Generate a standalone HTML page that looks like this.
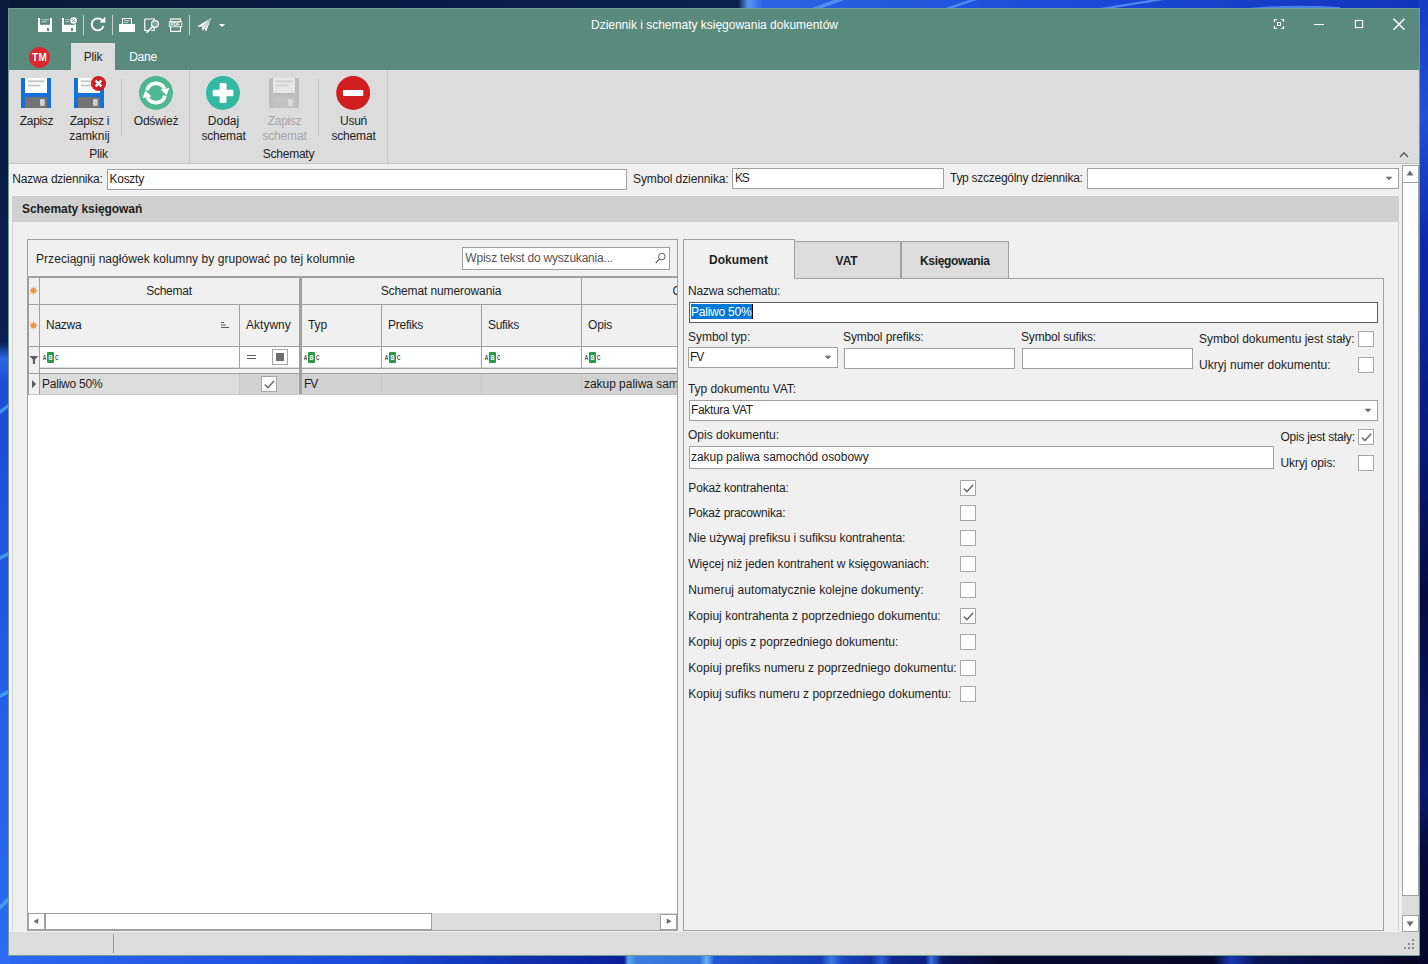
<!DOCTYPE html>
<html lang="pl">
<head>
<meta charset="utf-8">
<title>Dziennik i schematy księgowania dokumentów</title>
<style>
*{box-sizing:border-box;margin:0;padding:0}
html,body{width:1428px;height:964px;overflow:hidden}
body{position:relative;font-family:"Liberation Sans",sans-serif;font-size:12px;color:#1e1e1e;background:#0a1a3c}
#wall{position:absolute;left:0;top:0;width:1428px;height:964px}
#win{position:absolute;left:0;top:0;width:1428px;height:964px;overflow:hidden}
#win div,#win svg{position:absolute;white-space:nowrap}
.t{line-height:16px;height:16px}
.c{text-align:center}
.inp{background:#fff;border:1px solid #a0a0a0}
.cb{background:#fff;border:1px solid #a6a6a6}
</style>
</head>
<body>
<svg id="wall" viewBox="0 0 1428 964" preserveAspectRatio="none">
<defs>
<linearGradient id="lg" x1="0" y1="0" x2="0" y2="1"><stop offset="0" stop-color="#0a1a3e"/><stop offset=".355" stop-color="#0b2152"/><stop offset=".372" stop-color="#2a66e4"/><stop offset=".4" stop-color="#1a4cd4"/><stop offset=".6" stop-color="#2058e6"/><stop offset="1" stop-color="#2c6af4"/></linearGradient>
<linearGradient id="tg" x1="0" y1="0" x2="1" y2="0"><stop offset="0" stop-color="#0a1838"/><stop offset=".5" stop-color="#0c2150"/><stop offset=".517" stop-color="#0c2150"/><stop offset=".524" stop-color="#5a98f2"/><stop offset=".534" stop-color="#2a64e4"/><stop offset=".74" stop-color="#1c4cd8"/><stop offset="1" stop-color="#1232bc"/></linearGradient>
<linearGradient id="bg" x1="0" y1="0" x2="1" y2="0"><stop offset="0" stop-color="#2c68f0"/><stop offset="0.25" stop-color="#1a4cdc"/><stop offset="0.42" stop-color="#0c249c"/><stop offset="0.437" stop-color="#0a1e98"/><stop offset="0.44" stop-color="#5aa8ec"/><stop offset="0.446" stop-color="#3c7ce0"/><stop offset="0.49" stop-color="#3070dc"/><stop offset="0.495" stop-color="#6ab0f0"/><stop offset="0.5" stop-color="#2458d4"/><stop offset="0.575" stop-color="#163cb8"/><stop offset="0.582" stop-color="#3a78e0"/><stop offset="0.59" stop-color="#1a44c4"/><stop offset="0.61" stop-color="#12309c"/><stop offset="0.617" stop-color="#2a60d0"/><stop offset="0.625" stop-color="#0e2890"/><stop offset="0.648" stop-color="#0c2080"/><stop offset="0.652" stop-color="#3a70e0"/><stop offset="0.66" stop-color="#0a1660"/><stop offset="0.7" stop-color="#060a30"/><stop offset="0.85" stop-color="#05082a"/><stop offset="0.862" stop-color="#1838b0"/><stop offset="0.88" stop-color="#0a1658"/><stop offset="0.95" stop-color="#06093a"/><stop offset="1" stop-color="#04061c"/></linearGradient>
<linearGradient id="rg" x1="0" y1="0" x2="0" y2="1"><stop offset="0" stop-color="#163cc8"/><stop offset=".12" stop-color="#2250d8"/><stop offset=".25" stop-color="#0c2aae"/><stop offset=".45" stop-color="#081c80"/><stop offset=".62" stop-color="#050a40"/><stop offset=".82" stop-color="#0a1a70"/><stop offset=".88" stop-color="#060c3c"/><stop offset="1" stop-color="#05082c"/></linearGradient>
</defs>
<rect width="1428" height="964" fill="#0a1a3c"/>
<rect x="0" y="0" width="1428" height="10" fill="url(#tg)"/>
<path d="M812 8l22-8h10l-22 8zM945 8l24-8h8l-24 8zM1100 8l50-8h14l-50 8z" fill="#5a98f2" opacity=".8"/>
<path d="M1250 8q40-4 90-1l0 1z" fill="#4a80e8"/>
<rect x="0" y="953" width="1428" height="11" fill="url(#bg)"/>
<rect x="0" y="0" width="10" height="964" fill="url(#lg)"/>
<path d="M0 410l8-6v4l-8 6zM0 556l8-4v4l-8 4zM0 694l8-4v4l-8 4zM0 905l8-8v5l-8 8z" fill="#48a8f4" opacity=".8"/>
<rect x="1418" y="0" width="10" height="964" fill="url(#rg)"/>
<rect x="0" y="953" width="10" height="11" fill="#2c6af4"/>
<rect x="1418" y="0" width="10" height="10" fill="#163cc8"/>

</svg>
<div id="win">
<div class="" style="left:8px;top:8px;width:1412px;height:948px;background:#f0f0f0"></div>
<div class="" style="left:8px;top:8px;width:1412px;height:62px;background:#5a8a7b"></div>
<div class="" style="left:8px;top:70px;width:1412px;height:94px;background:#dcdcdc"></div>
<div class="" style="left:8px;top:163px;width:1412px;height:1px;background:#c6c6c6"></div>
<svg style="left:30px;top:12px" width="210" height="26" viewBox="30 12 210 26" fill="none">
<!-- save -->
<path d="M38 18h14v14H38z" fill="#fff"/>
<rect x="40" y="18" width="10" height="6.800" fill="#5a8a7b"/>
<rect x="41.500" y="19.300" width="7.500" height=".9" fill="#c5d6d0"/>
<rect x="41.500" y="21.300" width="5.500" height=".9" fill="#c5d6d0"/>
<rect x="47" y="28" width="2" height="3" fill="#5a8a7b"/>
<!-- save & close -->
<path d="M62 18h14v14H62z" fill="#fff"/>
<rect x="64" y="18" width="10" height="6.800" fill="#5a8a7b"/>
<rect x="65.500" y="19.300" width="4" height=".9" fill="#c5d6d0"/>
<rect x="65.500" y="21.300" width="3.500" height=".9" fill="#c5d6d0"/>
<rect x="71" y="28" width="2" height="3" fill="#5a8a7b"/>
<circle cx="73.600" cy="20.500" r="3.900" fill="#5a8a7b"/>
<circle cx="73.600" cy="20.500" r="3.300" fill="#fff"/>
<path d="M72.300 19.200l2.600 2.600M74.900 19.200l-2.600 2.600" stroke="#5a8a7b" stroke-width=".9"/>
<!-- sep -->
<rect x="83" y="15" width="1" height="20" fill="#c8cfcc"/>
<!-- refresh -->
<path d="M102.300 20.400A6 6 0 1 0 103.500 26" stroke="#fff" stroke-width="1.800" fill="none"/>
<path d="M99.600 22.600l5.800 .2-.2-6z" fill="#fff"/>
<rect x="112" y="15" width="1" height="20" fill="#c8cfcc"/>
<!-- print -->
<path d="M119 24h16v8h-16z" fill="#fff"/>
<rect x="122.500" y="18.500" width="9" height="6" fill="#5a8a7b" stroke="#fff" stroke-width="1"/>
<rect x="124" y="20" width="5.500" height=".9" fill="#c5d6d0"/><rect x="124" y="22" width="4" height=".9" fill="#c5d6d0"/>
<!-- preview -->
<path d="M144.800 19h9.400v3M144.800 19v11.500h4M154.200 27.500v3h-3" stroke="#fff" stroke-width="1.200"/>
<circle cx="155" cy="24" r="3.400" stroke="#fff" stroke-width="1.200" fill="#7fa79a"/>
<path d="M152.600 26.600l-6 6" stroke="#fff" stroke-width="1.600"/>
<!-- pdf -->
<rect x="170.600" y="19" width="9.800" height="12.400" stroke="#fff" stroke-width="1.200"/>
<rect x="169.200" y="21.600" width="12.600" height="5.200" fill="#5a8a7b" stroke="#fff" stroke-width=".8"/>
<!-- send -->
<path d="M197 26.500l14.300-8.500-5.300 13.800-1.300-3.600-2.200 2.800-.4-4.300z" fill="#fff"/>
<path d="M202.300 26.800l8-7.600-5.500 9" stroke="#5a8a7b" stroke-width=".7" fill="none"/>
<rect x="189" y="15" width="1" height="20" fill="#c8cfcc"/>
<path d="M219 24h6l-3 3z" fill="#fff"/>
</svg>
<div class="t" style="left:170.300px;top:21.700px;font-size:5px;line-height:5px;height:5px;font-weight:bold;color:#fff;letter-spacing:-.1px">PDF</div>
<div class="t" style="left:591.00px;top:17px;letter-spacing:-0.011px;color:#fff">Dziennik i schematy księgowania dokumentów</div>
<svg style="left:1268px;top:14px" width="144" height="22" viewBox="1268 14 144 22" fill="none" stroke="#fff">
<path d="M1274.400 22v-2.400h2.400M1281.200 19.600h2.400v2.400M1283.600 26v2.400h-2.400M1276.800 28.400h-2.400v-2.400" stroke-width="1.100"/>
<rect x="1277.500" y="22.500" width="3" height="3" stroke-width="1"/>
<path d="M1314 24.500h10" stroke-width="1"/>
<rect x="1355.400" y="20.500" width="7.200" height="7.100" stroke-width="1.100"/>
<path d="M1393.500 18.700l11 11M1404.500 18.700l-11 11" stroke-width="1.450"/>
</svg>
<div style="left:29px;top:47px;width:21px;height:21px;border-radius:50%;background:#dc2630"></div>
<div class="t c" style="left:29px;top:49.500px;width:21px;font-size:10px;font-weight:bold;color:#fff;letter-spacing:.5px;text-indent:.5px">TM</div>
<div class="" style="left:71px;top:43px;width:44px;height:27px;background:#dcdcdc"></div>
<div class="t" style="left:83.75px;top:49px;letter-spacing:-0.209px;">Plik</div>
<div class="t" style="left:129.21px;top:49px;letter-spacing:-0.275px;color:#fff">Dane</div>
<svg style="left:21px;top:78px;opacity:1" width="30" height="30" viewBox="0 0 30 30">
<rect width="30" height="30" fill="#1372d8"/>
<rect x="4" y="0" width="22" height="15" fill="#fff"/>
<rect x="6.700" y="2.300" width="16.600" height="2" fill="#c8c8c8"/>
<rect x="6.700" y="6.500" width="12.600" height="2" fill="#c8c8c8"/>
<rect x="4" y="19" width="22" height="11" fill="#737373"/>
<rect x="19" y="21" width="4.700" height="7" rx="1" fill="#d0d0d0"/>
</svg>
<svg style="left:74px;top:78px;opacity:1" width="30" height="30" viewBox="0 0 30 30">
<rect width="30" height="30" fill="#1372d8"/>
<rect x="4" y="0" width="22" height="15" fill="#fff"/>
<rect x="6.700" y="2.300" width="16.600" height="2" fill="#c8c8c8"/>
<rect x="6.700" y="6.500" width="12.600" height="2" fill="#c8c8c8"/>
<rect x="4" y="19" width="22" height="11" fill="#737373"/>
<rect x="19" y="21" width="4.700" height="7" rx="1" fill="#d0d0d0"/>
</svg>
<svg style="left:90px;top:75px" width="17" height="17" viewBox="0 0 17 17"><circle cx="8.500" cy="8.500" r="7.600" fill="#d11f26"/><path d="M5.600 5.600l5.800 5.800M11.400 5.600l-5.800 5.800" stroke="#fff" stroke-width="2.200"/></svg>
<div class="" style="left:121px;top:79px;width:1px;height:57px;background:#c4c4c4"></div>
<svg style="left:139px;top:76px" width="34" height="34" viewBox="0 0 34 34"><circle cx="17" cy="16.900" r="17" fill="#4fb792"/>
<path d="M8 14.300A9.400 9.400 0 0 1 25.600 12.800" stroke="#fff" stroke-width="3.700" fill="none"/>
<path d="M21.600 13.600l8.800-1.600-2.800 7.600z" fill="#fff"/>
<path d="M26 19.700A9.400 9.400 0 0 1 8.400 21.200" stroke="#fff" stroke-width="3.700" fill="none"/>
<path d="M12.400 20.400l-8.800 1.600 2.800-7.600z" fill="#fff"/>
</svg>
<div class="" style="left:189px;top:70px;width:1px;height:93px;background:#c4c4c4"></div>
<svg style="left:206px;top:76px" width="34" height="34" viewBox="0 0 34 34"><circle cx="17" cy="16.900" r="17" fill="#33b9a1"/>
<rect x="6.600" y="13.700" width="20.800" height="6.600" rx="1.200" fill="#fff"/><rect x="13.600" y="7" width="6.900" height="19.900" rx="1.200" fill="#fff"/></svg>
<svg style="left:269px;top:78px;opacity:1" width="30" height="30" viewBox="0 0 30 30">
<rect width="30" height="30" fill="#bdbdbd"/>
<rect x="4" y="0" width="22" height="15" fill="#e6e6e6"/>
<rect x="6.700" y="2.300" width="16.600" height="2" fill="#d2d2d2"/>
<rect x="6.700" y="6.500" width="12.600" height="2" fill="#d2d2d2"/>
<rect x="4" y="19" width="22" height="11" fill="#c2c2c2"/>
<rect x="19" y="21" width="4.700" height="7" rx="1" fill="#dadada"/>
</svg>
<div class="" style="left:318px;top:79px;width:1px;height:57px;background:#c4c4c4"></div>
<svg style="left:336px;top:76px" width="34" height="34" viewBox="0 0 34 34"><circle cx="17.200" cy="16.900" r="17" fill="#d11f1f"/>
<rect x="6.900" y="14" width="20.400" height="6" rx="1.200" fill="#fff"/></svg>
<div class="" style="left:387px;top:70px;width:1px;height:93px;background:#c4c4c4"></div>
<div class="t" style="left:19.78px;top:113px;letter-spacing:-0.317px;">Zapisz</div>
<div class="t" style="left:69.68px;top:113px;letter-spacing:-0.214px;">Zapisz i</div>
<div class="t" style="left:69.29px;top:128px;letter-spacing:-0.037px;">zamknij</div>
<div class="t" style="left:133.77px;top:113px;letter-spacing:-0.221px;">Odśwież</div>
<div class="t" style="left:207.74px;top:113px;letter-spacing:0.033px;">Dodaj</div>
<div class="t" style="left:201.40px;top:128px;letter-spacing:-0.166px;">schemat</div>
<div class="t" style="left:267.78px;top:113px;letter-spacing:-0.317px;color:#a6a6a6">Zapisz</div>
<div class="t" style="left:262.40px;top:128px;letter-spacing:-0.166px;color:#a6a6a6">schemat</div>
<div class="t" style="left:340.05px;top:113px;letter-spacing:-0.277px;">Usuń</div>
<div class="t" style="left:331.40px;top:128px;letter-spacing:-0.166px;">schemat</div>
<div class="t" style="left:89.25px;top:146px;letter-spacing:-0.209px;">Plik</div>
<div class="t" style="left:262.87px;top:146px;letter-spacing:-0.261px;">Schematy</div>
<svg style="left:1398px;top:150px" width="12" height="9" viewBox="0 0 12 9"><path d="M2 7l4-4.200 4 4.200" stroke="#5a5a5a" stroke-width="1.300" fill="none"/></svg>
<div class="t" style="left:12.3px;top:171px;letter-spacing:-0.234px;">Nazwa dziennika:</div>
<div class="inp" style="left:107px;top:169px;width:520px;height:21px;"></div>
<div class="t" style="left:109.5px;top:171px;letter-spacing:-0.272px;">Koszty</div>
<div class="t" style="left:633px;top:171px;letter-spacing:-0.106px;">Symbol dziennika:</div>
<div class="inp" style="left:732px;top:168px;width:212px;height:21px;"></div>
<div class="t" style="left:735px;top:170px;letter-spacing:-1.337px;">KS</div>
<div class="t" style="left:950px;top:170px;letter-spacing:-0.272px;">Typ szczególny dziennika:</div>
<div class="inp" style="left:1087px;top:168px;width:312px;height:21px;"></div>
<svg style="left:1385px;top:176px" width="8" height="5" viewBox="0 0 8 5"><path d="M.5 .8h7l-3.500 3.500z" fill="#6a6a6a"/></svg>
<div class="" style="left:12px;top:196px;width:1387px;height:735px;background:#f0f0f0;border-left:1px solid #d4d4d4;border-right:1px solid #d4d4d4"></div>
<div class="" style="left:12px;top:196px;width:1387px;height:26px;background:#d0d0d0"></div>
<div class="t" style="left:22px;top:201px;letter-spacing:-0.066px;font-weight:bold;">Schematy księgowań</div>
<div class="" style="left:27px;top:239px;width:651px;height:692px;background:#fff;border:1px solid #a0a0a0"></div>
<div class="" style="left:28px;top:240px;width:649px;height:37px;background:#f0f0f0"></div>
<div class="t" style="left:36px;top:251px;letter-spacing:0.051px;">Przeciągnij nagłówek kolumny by grupować po tej kolumnie</div>
<div class="inp" style="left:462px;top:247px;width:208px;height:23px;"></div>
<div class="t" style="left:465.3px;top:250px;letter-spacing:-0.207px;color:#555">Wpisz tekst do wyszukania...</div>
<svg style="left:654px;top:251px" width="13" height="14" viewBox="0 0 13 14" fill="none" stroke="#5a5a5a"><circle cx="7.800" cy="5.600" r="3.300" stroke-width="1"/><path d="M5.400 8.200l-3.600 3.800" stroke-width="1.200"/></svg>
<div class="" style="left:28px;top:277px;width:649px;height:70px;background:#f0f0f0"></div>
<div class="" style="left:28px;top:276px;width:649px;height:2px;background:#a0a0a0"></div>
<div class="" style="left:28px;top:304px;width:649px;height:1px;background:#a0a0a0"></div>
<div class="" style="left:28px;top:346px;width:649px;height:1px;background:#a0a0a0"></div>
<div class="" style="left:28px;top:347px;width:12px;height:26px;background:#f0f0f0"></div>
<div class="" style="left:40px;top:347px;width:637px;height:21px;background:#fff"></div>
<div class="" style="left:40px;top:367px;width:637px;height:1px;background:#dcdcdc"></div>
<div class="" style="left:40px;top:368px;width:637px;height:1px;background:#a0a0a0"></div>
<div class="" style="left:40px;top:369px;width:637px;height:4px;background:#f2f2f2"></div>
<div class="" style="left:28px;top:373px;width:649px;height:1px;background:#a0a0a0"></div>
<div class="" style="left:28px;top:374px;width:12px;height:20px;background:#f0f0f0"></div>
<div class="" style="left:40px;top:374px;width:199px;height:20px;background:#dcdcdc"></div>
<div class="" style="left:239px;top:374px;width:438px;height:20px;background:#d2d2d2"></div>
<div class="" style="left:28px;top:394px;width:649px;height:1px;background:#c8c8c8"></div>
<div class="" style="left:28px;top:278px;width:1px;height:117px;background:#a0a0a0"></div>
<div class="" style="left:39px;top:278px;width:1px;height:116px;background:#a0a0a0"></div>
<div class="" style="left:239px;top:305px;width:1px;height:63px;background:#a0a0a0"></div>
<div class="" style="left:239px;top:374px;width:1px;height:20px;background:#c6c6c6"></div>
<div class="" style="left:299px;top:278px;width:3px;height:116px;background:#a0a0a0"></div>
<div class="" style="left:381px;top:305px;width:1px;height:63px;background:#a0a0a0"></div>
<div class="" style="left:381px;top:374px;width:1px;height:20px;background:#c6c6c6"></div>
<div class="" style="left:481px;top:305px;width:1px;height:63px;background:#a0a0a0"></div>
<div class="" style="left:481px;top:374px;width:1px;height:20px;background:#c6c6c6"></div>
<div class="" style="left:581px;top:278px;width:1px;height:90px;background:#a0a0a0"></div>
<div class="" style="left:581px;top:374px;width:1px;height:20px;background:#c6c6c6"></div>
<div class="t" style="left:146.26px;top:283px;letter-spacing:-0.269px;">Schemat</div>
<div class="t" style="left:380.65px;top:283px;letter-spacing:-0.107px;">Schemat numerowania</div>
<div class="t" style="left:672.500px;top:283px;width:4.500px;overflow:hidden">O</div>
<div class="t" style="left:46px;top:317px;letter-spacing:-0.280px;">Nazwa</div>
<div class="t" style="left:246px;top:317px;letter-spacing:0.019px;">Aktywny</div>
<div class="t" style="left:308px;top:317px;letter-spacing:-0.068px;">Typ</div>
<div class="t" style="left:388px;top:317px;letter-spacing:-0.255px;">Prefiks</div>
<div class="t" style="left:488px;top:317px;letter-spacing:-0.300px;">Sufiks</div>
<div class="t" style="left:588px;top:317px;letter-spacing:-0.143px;">Opis</div>
<svg style="left:220px;top:321px" width="10" height="9" viewBox="0 0 10 9"><path d="M1 1.500h3M1 4h5M1 6.500h8" stroke="#5a5a5a" stroke-width="1"/></svg>
<svg style="left:29.4px;top:286.4px" width="9" height="9" viewBox="0 0 10 10"><g stroke="#f39237" stroke-width="1" opacity=".75"><path d="M5 0v10M0 5h10M1.500 1.500l7 7M8.500 1.500l-7 7"/></g><circle cx="5" cy="5" r="2.900" fill="#f39237"/></svg>
<svg style="left:29.4px;top:320.6px" width="9" height="9" viewBox="0 0 10 10"><g stroke="#f39237" stroke-width="1" opacity=".75"><path d="M5 0v10M0 5h10M1.500 1.500l7 7M8.500 1.500l-7 7"/></g><circle cx="5" cy="5" r="2.900" fill="#f39237"/></svg>
<svg style="left:29px;top:355px" width="10" height="10" viewBox="0 0 10 10"><path d="M.4 1h9l-3.400 3.600v4.400h-2.100v-4.400z" fill="#5c5c64"/></svg>
<svg style="left:42px;top:352px" width="17" height="11" viewBox="0 0 17 11"><rect x="5" y="0" width="7" height="11" rx=".9" fill="#2a9a4a"/><text transform="translate(.7,8) scale(.68,1)" font-family="Liberation Sans,sans-serif" font-size="7" font-weight="bold" fill="#45454d">A</text><text transform="translate(6.400,8) scale(.8,1)" font-family="Liberation Sans,sans-serif" font-size="7" font-weight="bold" fill="#fff">B</text><text transform="translate(12.900,8) scale(.66,1)" font-family="Liberation Sans,sans-serif" font-size="7" font-weight="bold" fill="#45454d">C</text></svg>
<svg style="left:303px;top:352px" width="17" height="11" viewBox="0 0 17 11"><rect x="5" y="0" width="7" height="11" rx=".9" fill="#2a9a4a"/><text transform="translate(.7,8) scale(.68,1)" font-family="Liberation Sans,sans-serif" font-size="7" font-weight="bold" fill="#45454d">A</text><text transform="translate(6.400,8) scale(.8,1)" font-family="Liberation Sans,sans-serif" font-size="7" font-weight="bold" fill="#fff">B</text><text transform="translate(12.900,8) scale(.66,1)" font-family="Liberation Sans,sans-serif" font-size="7" font-weight="bold" fill="#45454d">C</text></svg>
<svg style="left:384px;top:352px" width="17" height="11" viewBox="0 0 17 11"><rect x="5" y="0" width="7" height="11" rx=".9" fill="#2a9a4a"/><text transform="translate(.7,8) scale(.68,1)" font-family="Liberation Sans,sans-serif" font-size="7" font-weight="bold" fill="#45454d">A</text><text transform="translate(6.400,8) scale(.8,1)" font-family="Liberation Sans,sans-serif" font-size="7" font-weight="bold" fill="#fff">B</text><text transform="translate(12.900,8) scale(.66,1)" font-family="Liberation Sans,sans-serif" font-size="7" font-weight="bold" fill="#45454d">C</text></svg>
<svg style="left:484px;top:352px" width="17" height="11" viewBox="0 0 17 11"><rect x="5" y="0" width="7" height="11" rx=".9" fill="#2a9a4a"/><text transform="translate(.7,8) scale(.68,1)" font-family="Liberation Sans,sans-serif" font-size="7" font-weight="bold" fill="#45454d">A</text><text transform="translate(6.400,8) scale(.8,1)" font-family="Liberation Sans,sans-serif" font-size="7" font-weight="bold" fill="#fff">B</text><text transform="translate(12.900,8) scale(.66,1)" font-family="Liberation Sans,sans-serif" font-size="7" font-weight="bold" fill="#45454d">C</text></svg>
<svg style="left:584px;top:352px" width="17" height="11" viewBox="0 0 17 11"><rect x="5" y="0" width="7" height="11" rx=".9" fill="#2a9a4a"/><text transform="translate(.7,8) scale(.68,1)" font-family="Liberation Sans,sans-serif" font-size="7" font-weight="bold" fill="#45454d">A</text><text transform="translate(6.400,8) scale(.8,1)" font-family="Liberation Sans,sans-serif" font-size="7" font-weight="bold" fill="#fff">B</text><text transform="translate(12.900,8) scale(.66,1)" font-family="Liberation Sans,sans-serif" font-size="7" font-weight="bold" fill="#45454d">C</text></svg>
<svg style="left:246px;top:354px" width="11" height="6" viewBox="0 0 11 6"><path d="M1 1.500h9M1 4.500h9" stroke="#5a5a5a" stroke-width="1"/></svg>
<div class="" style="left:272px;top:349px;width:16px;height:16px;background:#fff;border:1px solid #a6a6a6"></div>
<div class="" style="left:276px;top:353px;width:8px;height:8px;background:#6e6e6e"></div>
<svg style="left:31px;top:378px" width="6" height="12" viewBox="0 0 6 12"><path d="M1 2l4.100 4.100-4.100 4.100z" fill="#5c5c64"/></svg>
<div class="t" style="left:42px;top:376px;letter-spacing:-0.233px;">Paliwo 50%</div>
<div class="cb" style="left:261px;top:376px;width:16px;height:16px;"><svg style="left:2px;top:3px" width="11" height="9" viewBox="0 0 11 9"><path d="M.8 4.500l3.100 3.100 6.300-6.900" stroke="#6e6e6e" stroke-width="1.500" fill="none"/></svg></div>
<div class="t" style="left:304px;top:376px;letter-spacing:-1.005px;">FV</div>
<div class="t" style="left:584px;top:376px;width:93px;overflow:hidden;letter-spacing:-0.040px;">zakup paliwa samochód osobowy</div>
<div class="" style="left:28px;top:913px;width:649px;height:17px;background:#dcdcdc"></div>
<div class="" style="left:28px;top:913px;width:403px;height:1px;background:#a0a0a0"></div>
<div class="" style="left:28px;top:929px;width:403px;height:1px;background:#a0a0a0"></div>
<div class="" style="left:28px;top:913px;width:1px;height:17px;background:#a0a0a0"></div>
<div class="" style="left:29px;top:914px;width:15px;height:15px;background:#fff"></div>
<div class="" style="left:44px;top:913px;width:2px;height:17px;background:#a0a0a0"></div>
<div class="" style="left:46px;top:914px;width:385px;height:15px;background:#fff"></div>
<div class="" style="left:431px;top:913px;width:1px;height:17px;background:#a0a0a0"></div>
<svg style="left:33px;top:917px" width="6" height="9" viewBox="0 0 6 9"><path d="M5.200 1.500v5.400l-4.700-2.700z" fill="#6a6a6a"/></svg>
<div class="" style="left:660px;top:914px;width:17px;height:16px;background:#fff;border:1px solid #a0a0a0"></div>
<svg style="left:666px;top:917px" width="6" height="9" viewBox="0 0 6 9"><path d="M.8 1.500v5.400l4.700-2.700z" fill="#6a6a6a"/></svg>
<div class="" style="left:683px;top:278px;width:701px;height:653px;background:#f0f0f0;border:1px solid #a0a0a0"></div>
<div class="" style="left:795px;top:241px;width:106px;height:38px;background:#dcdcdc;border:1px solid #a0a0a0;border-left:none"></div>
<div class="" style="left:901px;top:241px;width:108px;height:38px;background:#dcdcdc;border:1px solid #a0a0a0"></div>
<div class="" style="left:683px;top:239px;width:112px;height:40px;background:#f0f0f0;border:1px solid #a0a0a0;border-bottom:none"></div>
<div class="t" style="left:709.00px;top:252px;letter-spacing:0.041px;font-weight:bold;">Dokument</div>
<div class="t" style="left:835.60px;top:253px;letter-spacing:-0.073px;font-weight:bold;">VAT</div>
<div class="t" style="left:920.00px;top:253px;letter-spacing:-0.341px;font-weight:bold;">Księgowania</div>
<div class="t" style="left:688px;top:283px;letter-spacing:-0.215px;">Nazwa schematu:</div>
<div class="" style="left:689px;top:302px;width:689px;height:21px;background:#fff;border:1px solid #5a5a5a"></div>
<div class="" style="left:691px;top:304px;width:61px;height:15px;background:#0078d7"></div>
<div class="t" style="left:691px;top:304px;letter-spacing:-0.233px;color:#fff">Paliwo 50%</div>
<div class="" style="left:752px;top:304px;width:1px;height:15px;background:#000"></div>
<div class="t" style="left:688px;top:329px;letter-spacing:-0.036px;">Symbol typ:</div>
<div class="inp" style="left:688px;top:347px;width:150px;height:21px;"></div>
<div class="t" style="left:690px;top:349px;letter-spacing:-1.005px;">FV</div>
<svg style="left:824px;top:355px" width="8" height="5" viewBox="0 0 8 5"><path d="M.5 .8h7l-3.500 3.500z" fill="#6a6a6a"/></svg>
<div class="t" style="left:843px;top:329px;letter-spacing:-0.095px;">Symbol prefiks:</div>
<div class="inp" style="left:844px;top:348px;width:171px;height:21px;"></div>
<div class="t" style="left:1021px;top:329px;letter-spacing:-0.171px;">Symbol sufiks:</div>
<div class="inp" style="left:1022px;top:348px;width:171px;height:21px;"></div>
<div class="t" style="left:1199px;top:331px;letter-spacing:-0.021px;">Symbol dokumentu jest stały:</div>
<div class="cb" style="left:1358px;top:331px;width:16px;height:16px;"></div>
<div class="t" style="left:1199px;top:357px;letter-spacing:0.044px;">Ukryj numer dokumentu:</div>
<div class="cb" style="left:1358px;top:357px;width:16px;height:16px;"></div>
<div class="t" style="left:688px;top:381px;letter-spacing:-0.052px;">Typ dokumentu VAT:</div>
<div class="inp" style="left:689px;top:400px;width:689px;height:21px;"></div>
<div class="t" style="left:691px;top:402px;letter-spacing:-0.343px;">Faktura VAT</div>
<svg style="left:1364px;top:408px" width="8" height="5" viewBox="0 0 8 5"><path d="M.5 .8h7l-3.500 3.500z" fill="#6a6a6a"/></svg>
<div class="t" style="left:688px;top:427px;letter-spacing:0.023px;">Opis dokumentu:</div>
<div class="inp" style="left:689px;top:446px;width:585px;height:23px;"></div>
<div class="t" style="left:691px;top:449px;letter-spacing:-0.040px;">zakup paliwa samochód osobowy</div>
<div class="t" style="left:1280.5px;top:429px;letter-spacing:-0.233px;">Opis jest stały:</div>
<div class="cb" style="left:1358px;top:429px;width:16px;height:16px;"><svg style="left:2px;top:3px" width="11" height="9" viewBox="0 0 11 9"><path d="M.8 4.500l3.100 3.100 6.300-6.900" stroke="#6e6e6e" stroke-width="1.500" fill="none"/></svg></div>
<div class="t" style="left:1280.5px;top:455px;letter-spacing:-0.086px;">Ukryj opis:</div>
<div class="cb" style="left:1358px;top:455px;width:16px;height:16px;"></div>
<div class="t" style="left:688.3px;top:480px;letter-spacing:-0.167px;">Pokaż kontrahenta:</div>
<div class="cb" style="left:960px;top:480px;width:16px;height:16px;"><svg style="left:2px;top:3px" width="11" height="9" viewBox="0 0 11 9"><path d="M.8 4.500l3.100 3.100 6.300-6.900" stroke="#6e6e6e" stroke-width="1.500" fill="none"/></svg></div>
<div class="t" style="left:688.3px;top:505px;letter-spacing:-0.219px;">Pokaż pracownika:</div>
<div class="cb" style="left:960px;top:505px;width:16px;height:16px;"></div>
<div class="t" style="left:688.3px;top:530px;letter-spacing:-0.074px;">Nie używaj prefiksu i sufiksu kontrahenta:</div>
<div class="cb" style="left:960px;top:530px;width:16px;height:16px;"></div>
<div class="t" style="left:688.3px;top:556px;letter-spacing:-0.086px;">Więcej niż jeden kontrahent w księgowaniach:</div>
<div class="cb" style="left:960px;top:556px;width:16px;height:16px;"></div>
<div class="t" style="left:688.3px;top:582px;letter-spacing:0.066px;">Numeruj automatycznie kolejne dokumenty:</div>
<div class="cb" style="left:960px;top:582px;width:16px;height:16px;"></div>
<div class="t" style="left:688.3px;top:608px;letter-spacing:0.020px;">Kopiuj kontrahenta z poprzedniego dokumentu:</div>
<div class="cb" style="left:960px;top:608px;width:16px;height:16px;"><svg style="left:2px;top:3px" width="11" height="9" viewBox="0 0 11 9"><path d="M.8 4.500l3.100 3.100 6.300-6.900" stroke="#6e6e6e" stroke-width="1.500" fill="none"/></svg></div>
<div class="t" style="left:688.3px;top:634px;letter-spacing:-0.004px;">Kopiuj opis z poprzedniego dokumentu:</div>
<div class="cb" style="left:960px;top:634px;width:16px;height:16px;"></div>
<div class="t" style="left:688.3px;top:660px;letter-spacing:0.019px;">Kopiuj prefiks numeru z poprzedniego dokumentu:</div>
<div class="cb" style="left:960px;top:660px;width:16px;height:16px;"></div>
<div class="t" style="left:688.3px;top:686px;letter-spacing:0.004px;">Kopiuj sufiks numeru z poprzedniego dokumentu:</div>
<div class="cb" style="left:960px;top:686px;width:16px;height:16px;"></div>
<div class="" style="left:1402px;top:165px;width:17px;height:767px;background:#dcdcdc"></div>
<div class="" style="left:1402px;top:165px;width:17px;height:18px;background:#fff;border:1px solid #a0a0a0"></div>
<svg style="left:1406px;top:170px" width="8" height="6" viewBox="0 0 8 6"><path d="M.5 5.500h7l-3.500-5z" fill="#6a6a6a"/></svg>
<div class="" style="left:1402px;top:182px;width:17px;height:714px;background:#fff;border:1px solid #a0a0a0"></div>
<div class="" style="left:1402px;top:915px;width:17px;height:17px;background:#fff;border:1px solid #a0a0a0"></div>
<svg style="left:1406px;top:921px" width="8" height="6" viewBox="0 0 8 6"><path d="M.5 .5h7l-3.500 5z" fill="#6a6a6a"/></svg>
<div class="" style="left:8px;top:932px;width:1412px;height:24px;background:#dcdcdc"></div>
<div class="" style="left:113px;top:934px;width:1px;height:19px;background:#9a9a9a"></div>
<svg style="left:1403px;top:938px" width="12" height="12" viewBox="0 0 12 12" fill="#8a8a8a"><rect x="9" y="1" width="2" height="2"/><rect x="5" y="5" width="2" height="2"/><rect x="9" y="5" width="2" height="2"/><rect x="1" y="9" width="2" height="2"/><rect x="5" y="9" width="2" height="2"/><rect x="9" y="9" width="2" height="2"/></svg>
<div class="" style="left:8px;top:8px;width:1412px;height:948px;border:1px solid #6f9c8e;pointer-events:none"></div>
</div>
</body>
</html>
